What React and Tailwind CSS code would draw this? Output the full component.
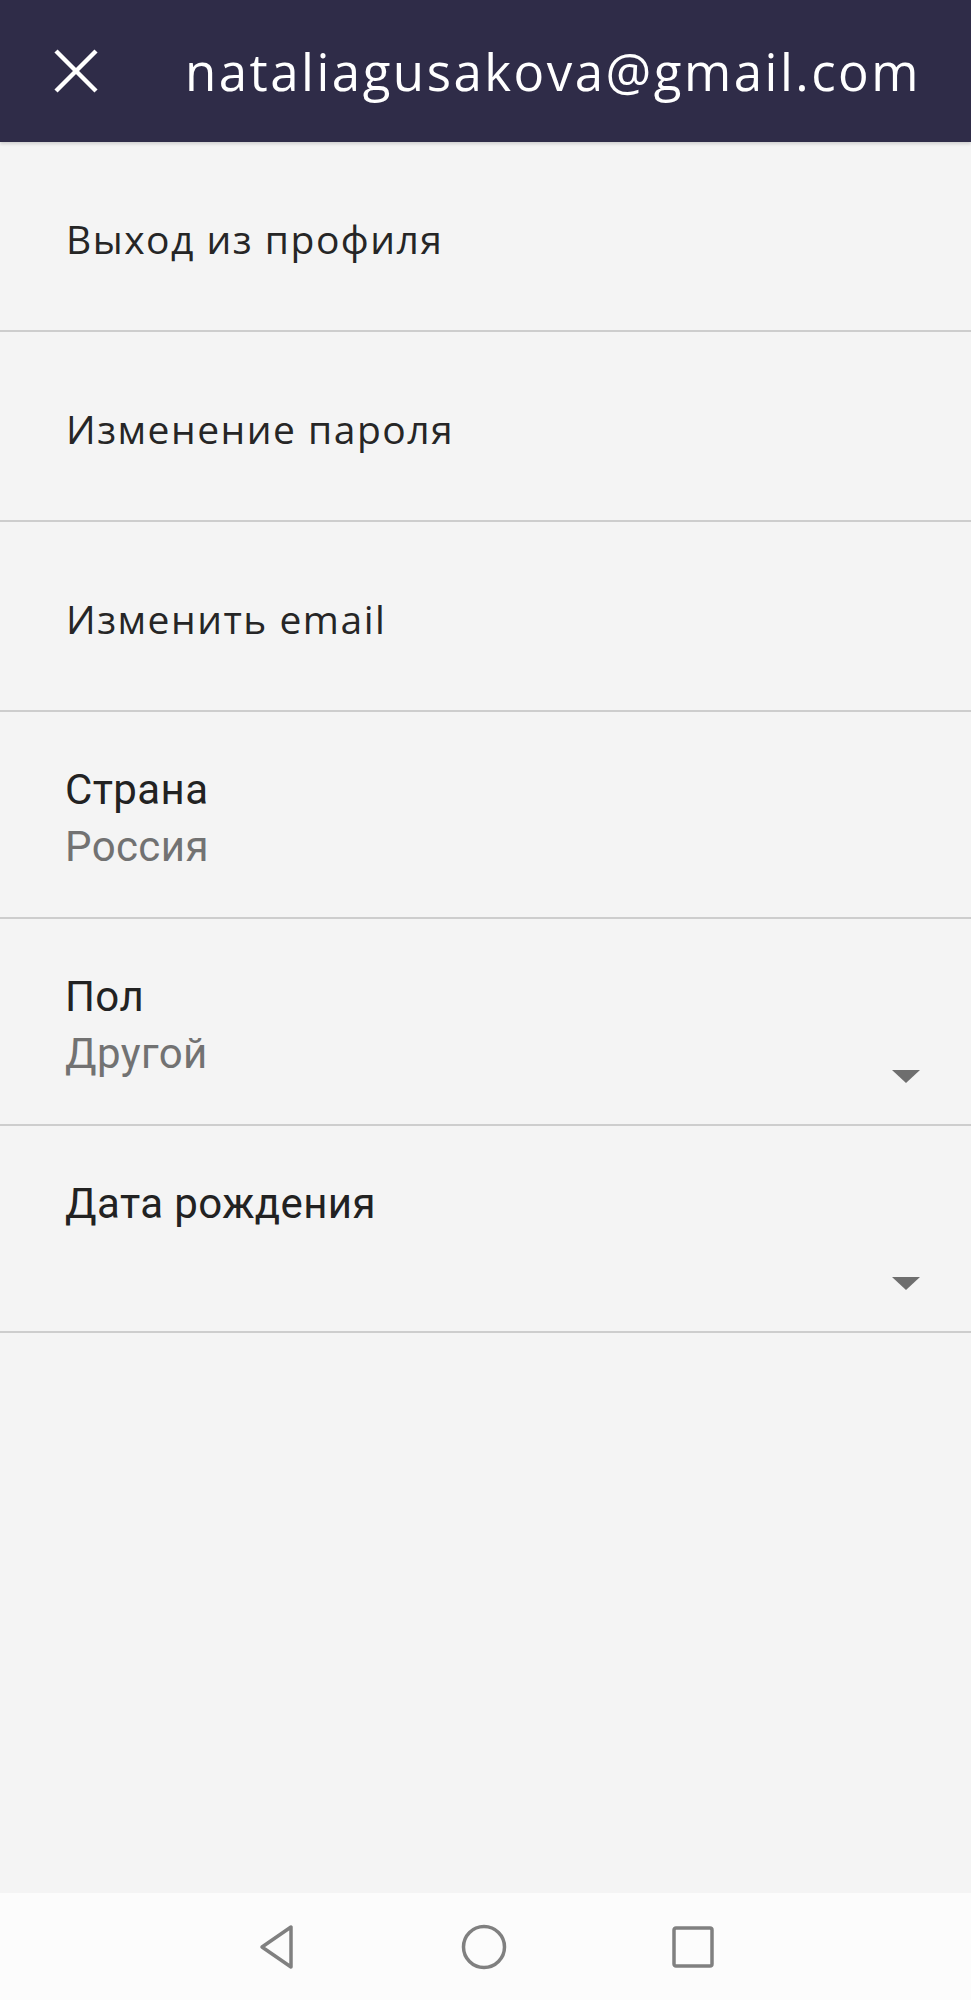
import React from "react";

function Row({ children }) {
  return (
    <div className="h-[190px] border-b-2 border-[#cdcdcd] flex items-center pl-[66px] pt-[6px]">
      <span className="text-[39px] text-[#262626] tracking-[1.5px]" style={{ fontFamily: '"Open Sans", sans-serif' }}>
        {children}
      </span>
    </div>
  );
}

function Arrow() {
  return (
    <svg width="30" height="15" viewBox="0 0 30 15" className="mb-[-2px] shrink-0">
      <polygon points="1,1 29,1 15,14" fill="#6e6e6e" />
    </svg>
  );
}

function FieldRow({ label, value, arrow }) {
  return (
    <div className="h-[207px] border-b-2 border-[#cdcdcd] flex flex-col pt-[49px] pl-[65px] pr-[50px]" style={{ fontFamily: "Roboto, sans-serif" }}>
      <div className="text-[42px] leading-[57px] tracking-[0.4px] text-[#222222]">{label}</div>
      <div className="flex items-end justify-between h-[57px]">
        <span className="text-[42px] leading-[57px] tracking-[0.4px] text-[#727272]">{value}</span>
        {arrow && <Arrow />}
      </div>
    </div>
  );
}

export default function App() {
  return (
    <div className="w-[971px] min-h-[2000px] flex flex-col bg-[#f4f4f4]">
      <header className="h-[142px] bg-[#2f2c48] flex items-center pl-[53px] pr-[50px] shadow-[0_2px_3px_rgba(0,0,0,0.15)] relative z-10">
        <svg width="46" height="44" viewBox="0 0 46 44" className="shrink-0">
          <line x1="3" y1="2" x2="43" y2="42" stroke="#ffffff" strokeWidth="4.5" />
          <line x1="43" y1="2" x2="3" y2="42" stroke="#ffffff" strokeWidth="4.5" />
        </svg>
        <div className="flex-1 text-right text-white text-[51px] tracking-[2.5px] whitespace-nowrap overflow-hidden" style={{ fontFamily: '"Open Sans", sans-serif' }}>
          nataliagusakova@gmail.com
        </div>
      </header>
      <Row>Выход из профиля</Row>
      <Row>Изменение пароля</Row>
      <Row>Изменить email</Row>
      <FieldRow label="Страна" value="Россия" />
      <FieldRow label="Пол" value="Другой" arrow />
      <FieldRow label="Дата рождения" value="" arrow />
      <div className="flex-1" />
      <nav className="h-[107px] bg-[#fcfcfc] flex items-center justify-center gap-[165px]">
        <svg width="38" height="46" viewBox="0 0 38 46">
          <path d="M33 3 L33 43 L4 23 Z" fill="none" stroke="#808080" strokeWidth="3.5" strokeLinejoin="round" />
        </svg>
        <svg width="46" height="46" viewBox="0 0 46 46">
          <circle cx="23" cy="23" r="20.5" fill="none" stroke="#808080" strokeWidth="3.5" />
        </svg>
        <svg width="42" height="42" viewBox="0 0 42 42">
          <rect x="2" y="2" width="38" height="38" rx="2" fill="none" stroke="#808080" strokeWidth="3.5" />
        </svg>
      </nav>
    </div>
  );
}
